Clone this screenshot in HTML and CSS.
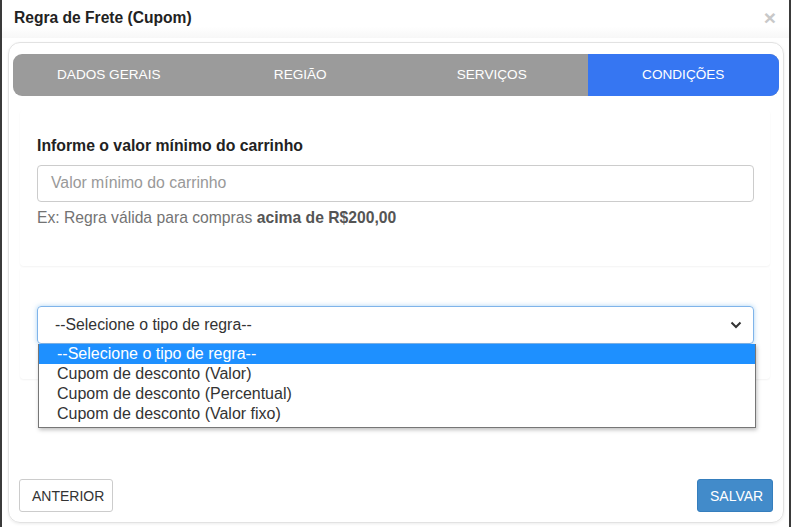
FILE: index.html
```html
<!DOCTYPE html>
<html lang="pt-BR">
<head>
<meta charset="utf-8">
<title>Regra de Frete (Cupom)</title>
<link rel="stylesheet" href="styles.css">
</head>
<body>
<div class="modal">
  <div class="modal-header">
    <h4 class="modal-title">Regra de Frete (Cupom)</h4>
    <span class="close">&times;</span>
  </div>
  <div class="card">
    <div class="tabs">
      <div class="tab">DADOS GERAIS</div>
      <div class="tab">REGIÃO</div>
      <div class="tab">SERVIÇOS</div>
      <div class="tab active">CONDIÇÕES</div>
    </div>
    <div class="tab-content">
      <div class="panel panel-first">
        <label class="label">Informe o valor mínimo do carrinho</label>
        <div class="input">Valor mínimo do carrinho</div>
        <p class="help">Ex: Regra válida para compras <b>acima de R$200,00</b></p>
      </div>
      <div class="panel panel-second">
        <div class="select-wrap">
          <div class="select">
            <span>--Selecione o tipo de regra--</span>
            <svg class="chev" width="12" height="8" viewBox="0 0 12 8"><path d="M1.5 1.5 L6 6 L10.5 1.5" fill="none" stroke="#333" stroke-width="2"/></svg>
          </div>
          <div class="dropdown">
            <div class="option selected">--Selecione o tipo de regra--</div>
            <div class="option">Cupom de desconto (Valor)</div>
            <div class="option">Cupom de desconto (Percentual)</div>
            <div class="option">Cupom de desconto (Valor fixo)</div>
          </div>
        </div>
      </div>
    </div>
    <div class="footer">
      <button class="btn btn-default">ANTERIOR</button>
      <button class="btn btn-primary">SALVAR</button>
    </div>
  </div>
</div>
</body>
</html>
```
FILE: styles.css
```css
html, body {
  margin: 0;
  padding: 0;
  height: 527px;
  overflow: hidden;
}
body {
  background: #3a3a3a;
  font-family: "Liberation Sans", Arial, sans-serif;
  color: #333;
}
.modal {
  margin-left: 2px;
  width: 787px;
  height: 527px;
  background: #fff;
  display: flex;
  flex-direction: column;
}
.modal-header {
  display: flex;
  justify-content: space-between;
  align-items: center;
  height: 38px;
  padding: 0 13px 0 12px;
  background: linear-gradient(#fff 70%, #f7f7f7);
  margin-bottom: 4px;
}
.modal-title {
  margin: 0;
  margin-top: -2px;
  font-size: 15.6px;
  font-weight: bold;
  color: #222;
}
.close {
  font-size: 21px;
  font-weight: bold;
  color: #c8c8c8;
  line-height: 1;
  margin-top: -4px;
}
.card {
  margin: 0 5px 0 6px;
  border: 1px solid #e2e2e2;
  border-radius: 12px;
  box-shadow: 0 1px 3px rgba(0,0,0,0.08);
  padding: 11px 4px 0 4px;
  display: flex;
  flex-direction: column;
  box-sizing: border-box;
  height: 481px;
}
.tabs {
  display: grid;
  grid-template-columns: repeat(4, 1fr);
  height: 42px;
  background: #9b9b9b;
  border-radius: 9px;
  overflow: hidden;
}
.tab {
  display: flex;
  align-items: center;
  justify-content: center;
  color: #fff;
  font-size: 13.6px;
  padding-bottom: 2px;
}
.tab.active {
  background: #3676f2;
}
.tab-content {
  padding: 14px 9px 0 7px;
}
.panel {
  border-radius: 4px;
  box-shadow: 0 1px 2px rgba(0,0,0,0.05);
  padding: 0 16px 0 17px;
}
.panel-first {
  padding-top: 26px;
  height: 156px;
  box-sizing: border-box;
}
.panel-second {
  margin-top: 1px;
  padding-top: 39px;
  height: 112px;
  box-sizing: border-box;
}
.label {
  display: block;
  font-size: 15.8px;
  font-weight: bold;
  line-height: 20px;
  color: #222;
  margin-bottom: 9px;
}
.input {
  height: 37px;
  box-sizing: border-box;
  border: 1px solid #ccc;
  border-radius: 4px;
  padding: 0 13px;
  display: flex;
  align-items: center;
  font-size: 15.8px;
  color: #999;
  padding-bottom: 1px;
}
.help {
  margin: 6px 0 0;
  font-size: 15.7px;
  line-height: 20px;
  color: #737373;
}
.help b {
  color: #555;
}
.select-wrap {
  position: relative;
}
.select {
  height: 38px;
  box-sizing: border-box;
  border: 1px solid #7fb4ea;
  border-radius: 4px;
  box-shadow: 0 0 5px rgba(102,175,233,0.55);
  padding: 0 11px 0 17px;
  display: flex;
  align-items: center;
  justify-content: space-between;
  font-size: 15.8px;
  color: #333;
}
.chev {
  display: block;
}
.dropdown {
  position: absolute;
  top: 38px;
  left: 1px;
  width: 718px;
  box-sizing: border-box;
  background: #fff;
  border: 1px solid #767676;
  border-top: none;
  box-shadow: 1px 2px 4px rgba(0,0,0,0.25);
  padding-bottom: 3px;
}
.option {
  height: 20px;
  line-height: 20px;
  font-size: 16px;
  color: #333;
  padding-left: 18px;
}
.option.selected {
  background: #1e90ff;
  color: #fff;
}
.footer {
  margin-top: auto;
  display: flex;
  justify-content: space-between;
  padding: 0 6px 10px;
}
.btn {
  height: 33px;
  box-sizing: border-box;
  font-family: "Liberation Sans", Arial, sans-serif;
  font-size: 14px;
  border-radius: 3px;
  padding: 0 12px;
  cursor: pointer;
}
.btn-default {
  background: #fff;
  border: 1px solid #ccc;
  color: #333;
  width: 94px;
}
.btn-primary {
  background: #428bca;
  border: 1px solid #357ebd;
  color: #fff;
  width: 76px;
}
```
